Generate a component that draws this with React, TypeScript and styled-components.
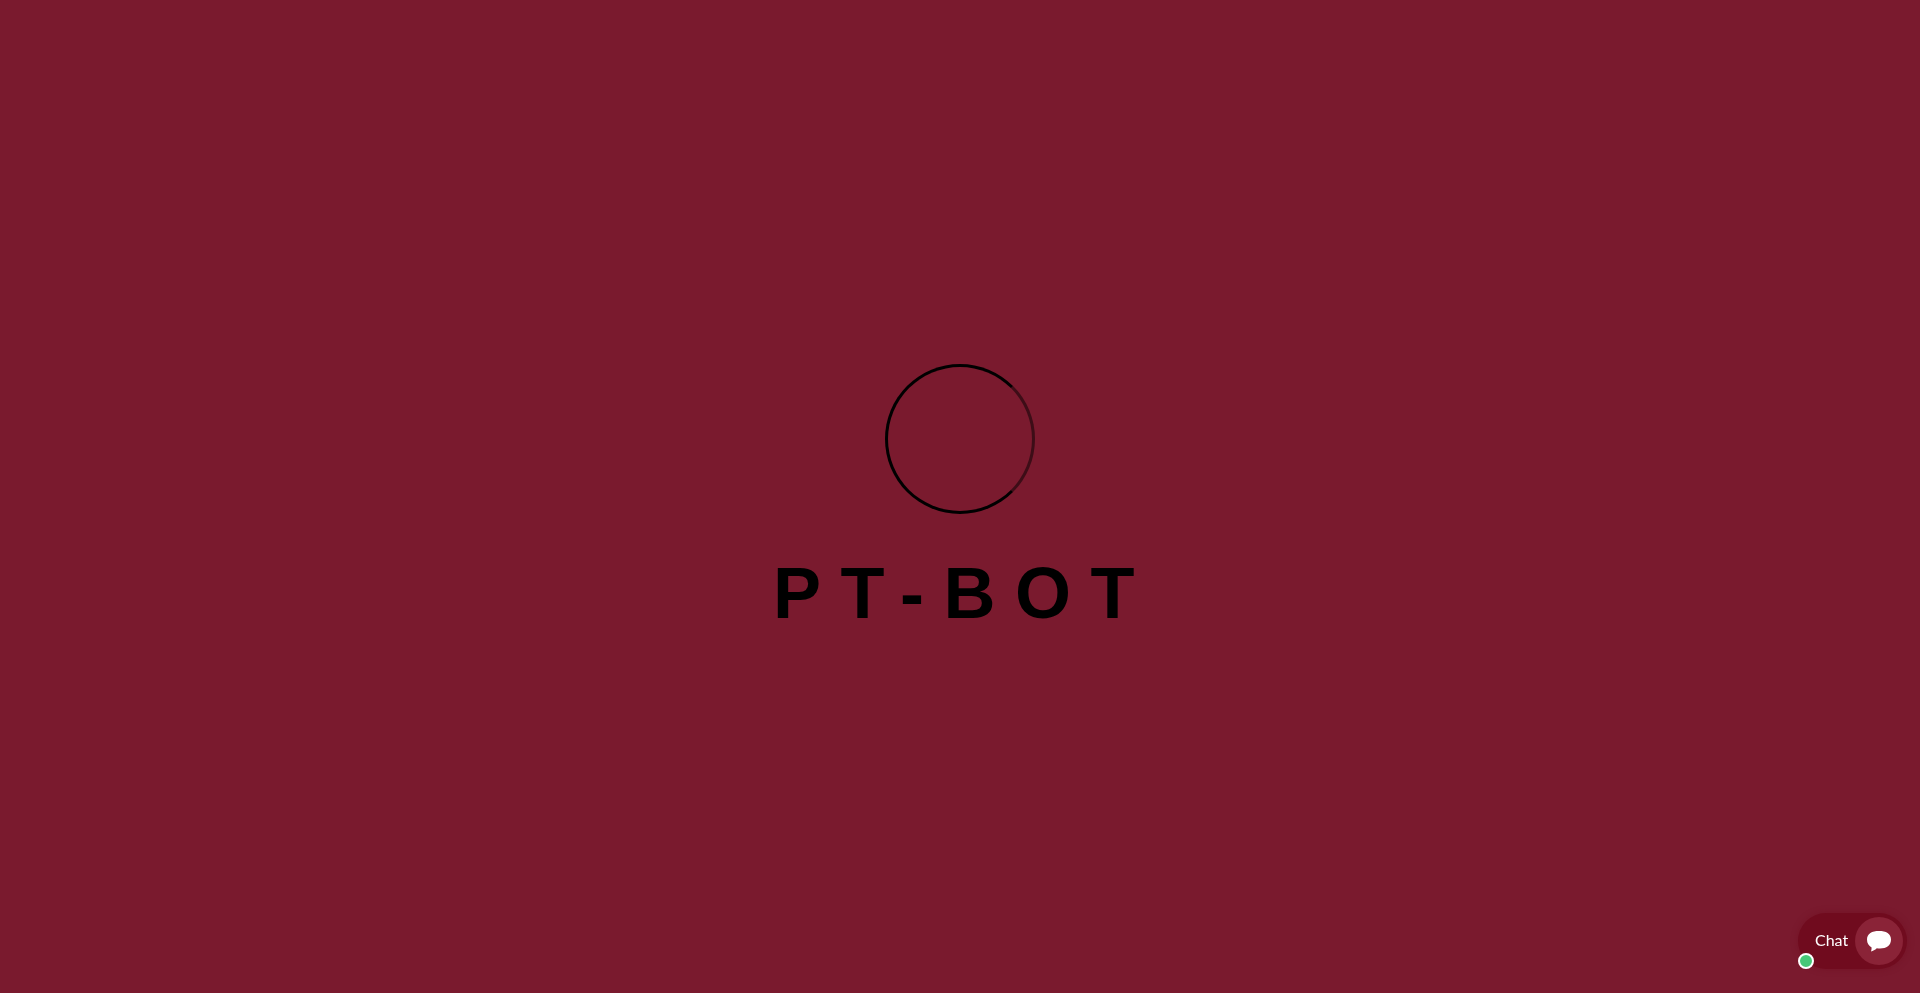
import styled, { createGlobalStyle } from "styled-components";

const GlobalStyle = createGlobalStyle`
  html, body {
    margin: 0;
    padding: 0;
    height: 100%;
    background: #7a1a2e;
  }
  #root {
    height: 100%;
  }
`;

const App = () => {
  return (
    <>
      <GlobalStyle />
      <Preloader>
        <Spinner />
        <Brand>PT-BOT</Brand>
      </Preloader>
      <ChatWidget>
        <ChatLabel>Chat</ChatLabel>
        <ChatButton>
          <svg width="26" height="26" viewBox="0 0 26 26">
            <path
              fill="#fff"
              d="M13 3C20 3 25 5.500 25 11.500C25 17.500 20.500 20.500 14 20.500C12.800 20.500 11.800 20.400 10.800 20.300C9 21.900 7 23.200 5 23.600C5.400 22.300 5.600 20.900 5.600 19.400C2.800 17.900 1 15.300 1 11.500C1 5.500 6 3 13 3Z"
            />
          </svg>
        </ChatButton>
        <OnlineDot />
      </ChatWidget>
    </>
  );
};

export default App;

const Preloader = styled.div`
  height: 993px;
  box-sizing: border-box;
  padding-top: 364px;
  display: flex;
  flex-direction: column;
  align-items: center;
  background: #7a1a2e;
`;

const Spinner = styled.div`
  width: 150px;
  height: 150px;
  box-sizing: border-box;
  border-radius: 50%;
  border: 3px solid #000;
  border-right-color: rgba(0, 0, 0, 0.5);
`;

const Brand = styled.div`
  margin: 38px 0 0 7px;
  font-family: "Liberation Sans", Arial, sans-serif;
  font-weight: 700;
  font-size: 72px;
  line-height: 82px;
  letter-spacing: 19.5px;
  color: #000;
`;

const ChatWidget = styled.div`
  position: fixed;
  right: 13px;
  bottom: 24px;
  width: 109px;
  height: 56px;
  box-sizing: border-box;
  padding: 0 4px 0 17px;
  display: flex;
  align-items: center;
  justify-content: space-between;
  border-radius: 28px;
  background: #700b1e;
  box-shadow: 0 0 6px rgba(112, 11, 30, 0.5);
`;

const ChatLabel = styled.span`
  font-family: Lato, sans-serif;
  font-size: 16px;
  line-height: 20px;
  margin-top: -2px;
  color: #fff;
`;

const ChatButton = styled.div`
  width: 48px;
  height: 48px;
  border-radius: 50%;
  background: #8a2337;
  display: flex;
  align-items: center;
  justify-content: center;
`;

const OnlineDot = styled.div`
  position: absolute;
  left: 0;
  bottom: 0;
  width: 16px;
  height: 16px;
  box-sizing: border-box;
  border-radius: 50%;
  border: 2px solid #fff;
  background: #46c878;
`;
